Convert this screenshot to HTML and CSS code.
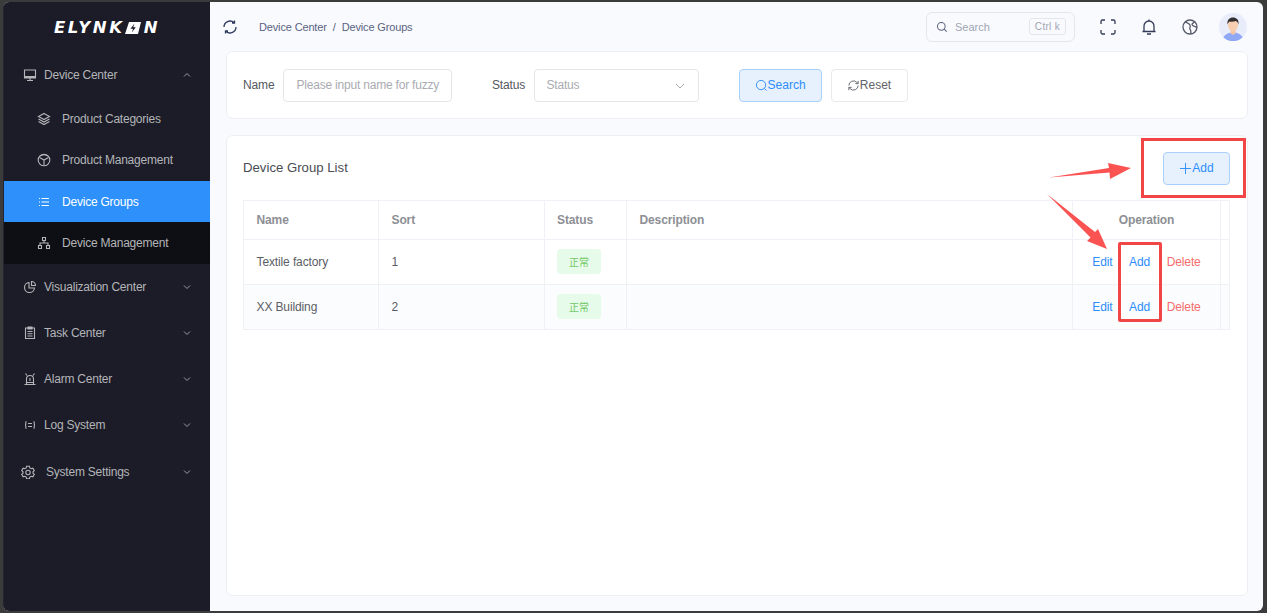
FILE: index.html
```html
<!DOCTYPE html>
<html lang="en">
<head>
<meta charset="utf-8">
<title>Device Groups</title>
<link rel="stylesheet" href="styles.css">
</head>
<body>
<div class="window">
  <aside class="sidebar">
    <div class="logo"><span>ELYNK</span><span class="logo-o"><svg viewBox="0 0 16 12" width="16" height="12"><path d="M4 0h12l-3 12H0zM9.500 1.500 5.500 6.800h2.600L6.800 10.500l4-5.300H8.200z" fill="#fff" fill-rule="evenodd"/></svg></span><span>N</span></div>
    <nav class="menu">
      <a class="item top">
        <svg class="ico" viewBox="0 0 14 14"><path d="M1.500 2h11v8h-11zM7 10v2.500M4 12.500h6" fill="none"/><path d="M1.500 8h11v2h-11z" class="solid"/></svg>
        <span class="label">Device Center</span>
        <svg class="chev" viewBox="0 0 10 10"><path d="M2 6.500 5 3.500l3 3"/></svg>
      </a>
      <a class="item sub">
        <svg class="ico" viewBox="0 0 14 14"><path d="M7 1.500 12.500 4.500 7 7.500 1.500 4.500zM1.500 7 7 10l5.500-3M1.500 9.500 7 12.500l5.500-3"/></svg>
        <span class="label">Product Categories</span>
      </a>
      <a class="item sub">
        <svg class="ico" viewBox="0 0 14 14"><circle cx="7" cy="7" r="5.800"/><path d="M2.500 4.500 7 7l4.500-2.500M7 7v5.500M7 1.500 3 3M7 1.500 11 3"/></svg>
        <span class="label">Product Management</span>
      </a>
      <a class="item sub active">
        <svg class="ico" viewBox="0 0 14 14"><path d="M4.500 3.500H12M4.500 7H12M4.500 10.500H12M2 3.500h1M2 7h1M2 10.500h1"/></svg>
        <span class="label">Device Groups</span>
      </a>
      <a class="item sub deep">
        <svg class="ico" viewBox="0 0 14 14"><path d="M5.500 1.500h3v3h-3zM1.500 9.500h3v3h-3zM9.500 9.500h3v3h-3zM7 4.500V7M3 9.500V7h8v2.500"/></svg>
        <span class="label">Device Management</span>
      </a>
      <a class="item top">
        <svg class="ico" viewBox="0 0 14 14"><path d="M6 2.500a5 5 0 1 0 5.500 5.500H6zM8.500 1.500a4 4 0 0 1 4 4h-4z"/></svg>
        <span class="label">Visualization Center</span>
        <svg class="chev" viewBox="0 0 10 10"><path d="M2 3.500 5 6.500l3-3"/></svg>
      </a>
      <a class="item top">
        <svg class="ico" viewBox="0 0 14 14"><path d="M2.500 2h9v10.500h-9zM5 1h4v2H5zM4.500 5.500h5M4.500 7.800h5M4.500 10h5"/></svg>
        <span class="label">Task Center</span>
        <svg class="chev" viewBox="0 0 10 10"><path d="M2 3.500 5 6.500l3-3"/></svg>
      </a>
      <a class="item top">
        <svg class="ico" viewBox="0 0 14 14"><path d="M1.500 12.500h11M3.500 12.500V7a3.500 3.500 0 0 1 7 0v5.500M7 6v3M2.500 1.500l1.500 2M11.500 1.500 10 3.500M3.500 10.500h7"/></svg>
        <span class="label">Alarm Center</span>
        <svg class="chev" viewBox="0 0 10 10"><path d="M2 3.500 5 6.500l3-3"/></svg>
      </a>
      <a class="item top">
        <svg class="ico" viewBox="0 0 14 14"><path d="M3.500 3.500C2.500 3.500 2.800 5 2.800 6S2 7 2 7s.8 0 .8 1-.3 2.500.7 2.500M10.500 3.500c1 0 .7 1.500.7 2.500s.8 1 .8 1-.8 0-.8 1 .3 2.500-.7 2.500M5 5.500h4M5 8.500h4"/></svg>
        <span class="label">Log System</span>
        <svg class="chev" viewBox="0 0 10 10"><path d="M2 3.500 5 6.500l3-3"/></svg>
      </a>
      <a class="item top settings">
        <svg class="ico" viewBox="0 0 14 14"><path d="M5.600 1.200H8.400L8.800 2.900 10.200 3.700 11.900 3.200 13.300 5.600 12 6.800V8.200L13.300 9.400 11.900 11.800 10.200 11.300 8.800 12.100 8.400 13.800H5.600L5.200 12.100 3.800 11.300 2.100 11.800 .7 9.400 2 8.200V6.800L.7 5.600 2.100 3.200 3.800 3.700 5.200 2.900z"/><circle cx="7" cy="7.500" r="2.200"/></svg>
        <span class="label">System Settings</span>
        <svg class="chev" viewBox="0 0 10 10"><path d="M2 3.500 5 6.500l3-3"/></svg>
      </a>
    </nav>
  </aside>
  <main class="main">
    <header class="topbar">
      <svg class="refresh" viewBox="0 0 16 16"><path d="M2 8a6 6 0 0 1 10-4.400M14 8a6 6 0 0 1-10 4.400M12.500 1.500v2.500H10M3.500 14.500V12H6"/></svg>
      <div class="crumbs">Device Center<span class="sep">/</span>Device Groups</div>
      <div class="search-box">
        <svg class="glass" viewBox="0 0 14 14"><circle cx="6.200" cy="6.200" r="4.500"/><path d="m9.500 9.500 3 3"/></svg>
        <span class="search-text">Search</span>
        <kbd>Ctrl k</kbd>
      </div>
      <svg class="tool" viewBox="0 0 18 18"><path d="M2 6V3.500A1.500 1.500 0 0 1 3.500 2H6M12 2h2.500A1.500 1.500 0 0 1 16 3.500V6M16 12v2.500a1.500 1.500 0 0 1-1.500 1.500H12M6 16H3.500A1.500 1.500 0 0 1 2 14.500V12"/></svg>
      <svg class="tool" viewBox="0 0 18 18"><path d="M2.500 13.500h13M4 13.500V8a5 5 0 0 1 10 0v5.500M9 3V1.500M7 16h4"/></svg>
      <svg class="tool globe" viewBox="0 0 18 18"><circle cx="9" cy="9" r="7"/><path d="M4 4c2 1 4 1 5 3s-1 3 0 4 1 3 1 5M14 3.500c-1 1.500-3 1.500-3 3s3 2 5 3"/></svg>
      <svg class="avatar" viewBox="0 0 28 28"><circle cx="14" cy="14" r="14" fill="#e9ecfb"/><path d="M4.500 24.500c1.500-3.500 5-5 9.500-5s8 1.500 9.500 5a14 14 0 0 1-19 0z" fill="#8fa8f5"/><path d="M11.500 16h5v4.500c-1.500 1.500-3.500 1.500-5 0z" fill="#f5c6a5"/><ellipse cx="14" cy="12" rx="5" ry="6.500" fill="#f8cfb0"/><path d="M8.500 11.500C8 6.500 10.500 4.500 14 4.500s6 2 5.500 7c-.5-2-1.500-3-2.500-3.500-2 .8-5 1-6.500.5-.8.800-1.700 1.800-2 3z" fill="#33302f"/></svg>
    </header>

    <section class="card filters">
      <label class="f-label">Name</label>
      <div class="field name-field">Please input name for fuzzy</div>
      <label class="f-label status-label">Status</label>
      <div class="field status-field">Status
        <svg class="select-chev" viewBox="0 0 10 10"><path d="M1 3 5 7l4-4"/></svg>
      </div>
      <button class="btn primary search-btn"><svg viewBox="0 0 14 14"><circle cx="6.500" cy="6.500" r="5"/><path d="m10 10 2.500 2.500"/></svg>Search</button>
      <button class="btn reset-btn"><svg viewBox="0 0 14 14"><path d="M2 7a5 5 0 0 1 8.500-3.500L12 5M12 7a5 5 0 0 1-8.500 3.500L2 9M12 2v3H9M2 12V9h3"/></svg>Reset</button>
    </section>

    <section class="card list">
      <div class="list-head">
        <h2>Device Group List</h2>
        <button class="btn primary add-btn"><svg viewBox="0 0 14 14"><path d="M7 1v12M1 7h12"/></svg>Add</button>
      </div>
      <table>
        <colgroup>
          <col class="c-name"><col class="c-sort"><col class="c-status"><col class="c-desc"><col class="c-op"><col class="c-gut">
        </colgroup>
        <thead>
          <tr><th>Name</th><th>Sort</th><th>Status</th><th>Description</th><th class="center">Operation</th><th></th></tr>
        </thead>
        <tbody>
          <tr>
            <td>Textile factory</td><td>1</td><td><span class="tag">正常</span></td><td></td>
            <td class="ops"><a class="link">Edit</a><a class="link">Add</a><a class="link danger">Delete</a></td><td></td>
          </tr>
          <tr class="alt">
            <td>XX Building</td><td>2</td><td><span class="tag">正常</span></td><td></td>
            <td class="ops"><a class="link">Edit</a><a class="link">Add</a><a class="link danger">Delete</a></td><td></td>
          </tr>
        </tbody>
      </table>
    </section>
  </main>
</div>
<div class="mark mark-add"></div>
<div class="mark mark-ops"></div>
<svg class="arrows" viewBox="0 0 1267 613" width="1267" height="613">
  <path d="M1049 177.500 1109 168 1108 163 1131 168 1110 179 1109.500 172.500z" fill="#fb5252"/>
  <path d="M1047 194 1095 232 1098 229 1107 249 1087 241 1090.500 237.500z" fill="#fb5252"/>
</svg>
</body>
</html>
```
FILE: styles.css
```css
* { box-sizing: border-box; }
html, body { margin: 0; height: 100%; }
body {
  width: 1267px;
  height: 613px;
  overflow: hidden;
  background: #3b3b3b;
  padding: 2px 4px 2px 3px;
  font-family: "Liberation Sans", Arial, sans-serif;
  font-size: 12px;
  position: relative;
}
.window {
  display: flex;
  height: 609px;
  border-radius: 6px;
  overflow: hidden;
  background: #f9fafd;
}
.sidebar {
  width: 207px;
  flex: none;
  background: #1b1c27;
  border-left: 1px solid #23242e;
}
.logo {
  height: 50px;
  padding-top: 16px;
  display: flex;
  justify-content: center;
  align-items: flex-start;
  color: #fff;
  font-size: 16.500px;
  line-height: 20px;
  font-weight: 700;
  font-style: italic;
  letter-spacing: 2.600px;
  font-family: "DejaVu Sans", sans-serif;
}
.logo-o { display: flex; padding-top: 4px; margin: 0 3px 0 0; }
.menu { display: flex; flex-direction: column; }
.item {
  display: flex;
  align-items: center;
  color: #b4b5b9;
  font-size: 12px;
  letter-spacing: -.22px;
}
.top { height: 46.200px; padding-left: 19px; }
.sub { height: 41.400px; padding-left: 33px; }
.ico {
  width: 14px;
  height: 14px;
  flex: none;
  fill: none;
  stroke: currentColor;
  stroke-width: 1.100;
}
.solid { fill: currentColor; stroke: none; }
.top .label { margin-left: 7px; }
.sub .label { margin-left: 11px; }
.settings { padding-left: 17px; }
.settings .label { margin-left: 11px; }
.chev {
  width: 10px;
  height: 10px;
  margin-left: auto;
  margin-right: 18px;
  fill: none;
  stroke: #9b9ca2;
  stroke-width: 1;
}
.active { background: #2d90fb; color: #fff; }
.deep { background: #0e0f14; }

.main { flex: 1; min-width: 0; padding: 0 15px 0 16px; display: flex; flex-direction: column; }
.topbar { height: 49px; display: flex; align-items: center; flex: none; }
.refresh { width: 16px; height: 16px; margin-left: -4px; fill: none; stroke: #2f3b5c; stroke-width: 1.300; }
.crumbs { margin-left: 21px; color: #5a6384; font-size: 11px; letter-spacing: -.15px; }
.sep { margin: 0 6px; }
.search-box {
  margin-left: auto;
  margin-right: 24px;
  width: 149px;
  height: 30px;
  border: 1px solid #e4e6ee;
  border-radius: 6px;
  display: flex;
  align-items: center;
  padding: 0 8px 0 9px;
  color: #a1a5b5;
  font-size: 11px;
}
.glass { width: 12px; height: 12px; fill: none; stroke: #5c6480; stroke-width: 1.200; }
.search-text { margin-left: 7px; }
kbd {
  margin-left: auto;
  font: inherit;
  font-size: 10px;
  border: 1px solid #e4e6ee;
  border-radius: 3px;
  padding: 2px 5px;
  letter-spacing: .3px;
}
.tool { width: 18px; height: 18px; margin-right: 23px; fill: none; stroke: #333c58; stroke-width: 1.300; flex: none; }
.globe { stroke: #555a68; margin-right: 20px; }
.avatar { width: 28px; height: 28px; flex: none; margin-right: 1px; }

.card {
  background: #fff;
  border: 1px solid #eceef4;
  border-radius: 7px;
}
.filters {
  height: 68px;
  flex: none;
  display: flex;
  align-items: center;
  padding-left: 16px;
}
.f-label { color: #55585f; font-size: 12px; letter-spacing: -.15px; }
.field {
  height: 33px;
  border: 1px solid #e4e6ea;
  border-radius: 4px;
  color: #a9abb1;
  display: flex;
  align-items: center;
  padding-left: 12px;
  font-size: 12px;
  letter-spacing: -.2px;
}
.name-field { width: 169px; margin-left: 9px; }
.status-label { margin-left: 39.500px; }
.status-field { width: 165px; margin-left: 8.500px; position: relative; }
.select-chev {
  position: absolute;
  right: 13px;
  top: 11px;
  width: 10px;
  height: 10px;
  fill: none;
  stroke: #a9abb1;
  stroke-width: 1;
}
.btn {
  font: inherit;
  font-size: 12px;
  height: 33px;
  border-radius: 4px;
  display: inline-flex;
  align-items: center;
  justify-content: center;
  padding: 0;
  background: #fff;
  border: 1px solid #e8e9ed;
  color: #5f6268;
}
.btn svg { width: 13px; height: 13px; fill: none; stroke: currentColor; stroke-width: 1; }
.primary { background: #e6f1fd; border-color: #a8d0fa; color: #2d8dfb; }
.search-btn { width: 83px; margin-left: 40px; }
.reset-btn { width: 77px; margin-left: 9px; }

.list {
  flex: none;
  height: 461px;
  margin-top: 16px;
  padding: 0 17px 0 16px;
}
.list-head {
  height: 64px;
  display: flex;
  align-items: center;
  justify-content: space-between;
}
h2 { margin: -2px 0 0; font-size: 13.200px; font-weight: 400; color: #4a4c52; }
.add-btn { width: 67px; }
.add-btn svg { width: 13px; height: 13px; }

table {
  width: 986px;
  border-collapse: collapse;
  table-layout: fixed;
  border: 1px solid #f0f1f6;
  font-size: 12px;
  letter-spacing: -.12px;
  color: #5c5e64;
}
.c-name { width: 135px; }
.c-sort { width: 165.500px; }
.c-status { width: 82.500px; }
.c-desc { width: 446px; }
.c-op { width: 148px; }
.c-gut { width: 9px; }
th, td {
  border: 1px solid #f0f1f6;
  padding: 0 0 0 12.500px;
  text-align: left;
}
th { height: 39px; color: #8d8f95; font-weight: 700; }
td { height: 45px; }
th.center { text-align: center; padding: 0; }
.alt td { background: #fbfcfe; }
.tag {
  display: inline-flex;
  align-items: center;
  justify-content: center;
  width: 44px;
  height: 25px;
  border-radius: 4px;
  background: #e6fbe9;
  color: #73c966;
  font-family: "Noto Sans CJK SC", sans-serif;
  font-size: 10px;
  position: relative;
  top: -1px;
}
td.ops { padding: 0; text-align: center; }
.link { color: #2d8dfb; margin: 0 8.300px; }
.danger { color: #f56c6c; }

.mark { position: absolute; border: 3px solid #f04646; }
.mark-add { left: 1141px; top: 138px; width: 105px; height: 60px; }
.mark-ops { left: 1118px; top: 242px; width: 44px; height: 80px; border-radius: 2px; }
.arrows { position: absolute; left: 0; top: 0; pointer-events: none; }
```
